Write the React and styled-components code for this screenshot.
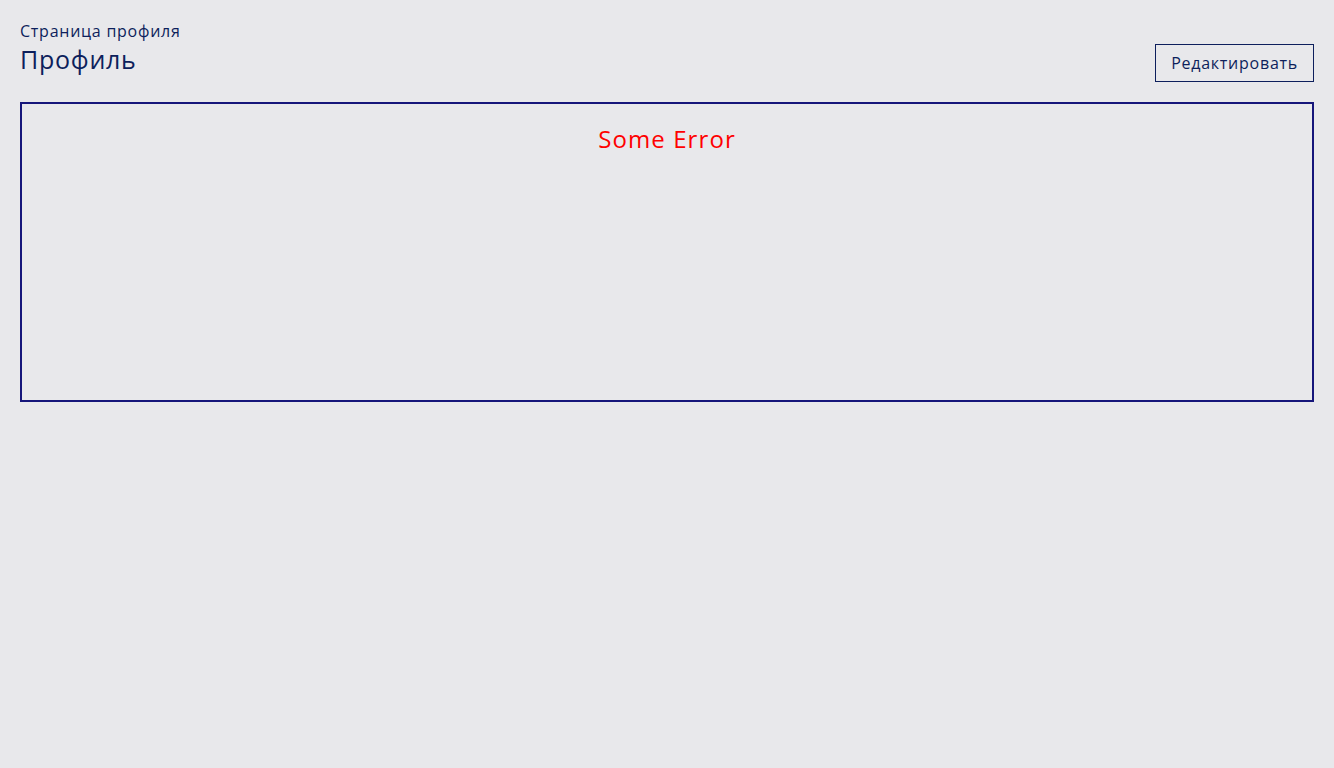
import React from 'react';
import styled, { createGlobalStyle } from 'styled-components';

const GlobalStyle = createGlobalStyle`
    html, body {
        margin: 0;
        padding: 0;
        background: #e8e8eb;
        font-family: "Open Sans", "DejaVu Sans", sans-serif;
    }
`;

const Page = styled.div`
    padding: 20px;
    min-height: 100vh;
    box-sizing: border-box;
`;

const Header = styled.div`
    display: flex;
    justify-content: space-between;
    align-items: flex-end;
    margin-bottom: 20px;
`;

const Titles = styled.div`
    display: flex;
    flex-direction: column;
    padding-bottom: 6px;
    color: #0d1f5c;
    letter-spacing: 0.75px;
`;

const Subtitle = styled.div`
    font-size: 16px;
    line-height: 22px;
`;

const Title = styled.h1`
    margin: 0;
    font-size: 25px;
    font-weight: 400;
    line-height: 34px;
`;

const EditButton = styled.button`
    height: 38px;
    padding: 0 15px;
    background: transparent;
    border: 1px solid #0d1f5c;
    color: #0d1f5c;
    font-family: inherit;
    font-size: 16px;
    letter-spacing: 0.75px;
    cursor: pointer;
`;

const Card = styled.div`
    height: 300px;
    box-sizing: border-box;
    border: 2px solid #16167a;
    padding-top: 18px;
    text-align: center;
`;

const ErrorText = styled.div`
    color: #ff0000;
    font-size: 24px;
    line-height: 34px;
    letter-spacing: 1.1px;
`;

const App = () => (
    <Page>
        <GlobalStyle />
        <Header>
            <Titles>
                <Subtitle>Страница профиля</Subtitle>
                <Title>Профиль</Title>
            </Titles>
            <EditButton>Редактировать</EditButton>
        </Header>
        <Card>
            <ErrorText>Some Error</ErrorText>
        </Card>
    </Page>
);

export default App;
